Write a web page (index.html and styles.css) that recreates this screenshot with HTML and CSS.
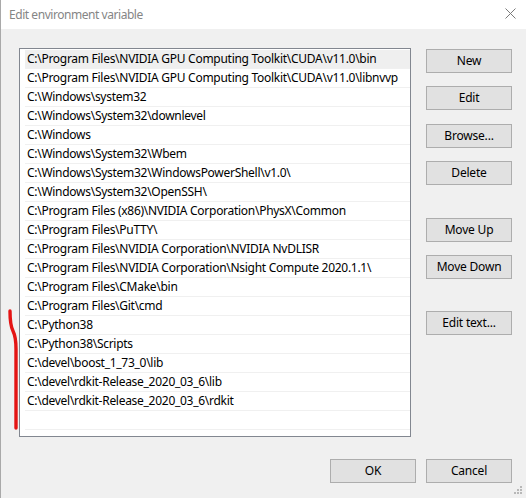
FILE: index.html
```html
<!DOCTYPE html>
<html>
<head>
<meta charset="utf-8">
<link rel="stylesheet" href="styles.css">
</head>
<body>
<div class="dialog">
  <div class="titlebar">
    <span class="title">Edit environment variable</span>
    <svg class="close" width="11" height="11" viewBox="0 0 11 11"><path d="M0.5 0.5 L10.5 10.5 M10.5 0.5 L0.5 10.5" stroke="#7a7a7a" stroke-width="1" fill="none"/></svg>
  </div>
  <div class="content">
    <div class="main">
      <div class="listbox">
        <div class="row selected">C:\Program Files\NVIDIA GPU Computing Toolkit\CUDA\v11.0\bin</div>
        <div class="row">C:\Program Files\NVIDIA GPU Computing Toolkit\CUDA\v11.0\libnvvp</div>
        <div class="row">C:\Windows\system32</div>
        <div class="row">C:\Windows\System32\downlevel</div>
        <div class="row">C:\Windows</div>
        <div class="row">C:\Windows\System32\Wbem</div>
        <div class="row">C:\Windows\System32\WindowsPowerShell\v1.0\</div>
        <div class="row">C:\Windows\System32\OpenSSH\</div>
        <div class="row">C:\Program Files (x86)\NVIDIA Corporation\PhysX\Common</div>
        <div class="row">C:\Program Files\PuTTY\</div>
        <div class="row">C:\Program Files\NVIDIA Corporation\NVIDIA NvDLISR</div>
        <div class="row">C:\Program Files\NVIDIA Corporation\Nsight Compute 2020.1.1\</div>
        <div class="row">C:\Program Files\CMake\bin</div>
        <div class="row">C:\Program Files\Git\cmd</div>
        <div class="row">C:\Python38</div>
        <div class="row">C:\Python38\Scripts</div>
        <div class="row">C:\devel\boost_1_73_0\lib</div>
        <div class="row">C:\devel\rdkit-Release_2020_03_6\lib</div>
        <div class="row">C:\devel\rdkit-Release_2020_03_6\rdkit</div>
        <div class="row"></div>
      </div>
      <div class="buttons">
        <button class="btn">New</button>
        <button class="btn gap13">Edit</button>
        <button class="btn gap14">Browse...</button>
        <button class="btn gap13">Delete</button>
        <button class="btn gap33">Move Up</button>
        <button class="btn gap13">Move Down</button>
        <button class="btn gap32">Edit text...</button>
      </div>
    </div>
    <div class="footer">
      <button class="btn">OK</button>
      <button class="btn">Cancel</button>
    </div>
  </div>
  <svg class="mark" width="20" height="130" viewBox="0 0 20 130"><path d="M10 11 C10 21 10.5 26 13 31 C15.5 36 16 40 16 49 L16 128" stroke="#e41414" stroke-width="3.4" fill="none" stroke-linecap="round"/></svg>
  <svg class="grip" width="8" height="8" viewBox="0 0 8 8" fill="#b8b8b8"><rect x="6" y="0" width="2" height="2"/><rect x="3" y="3" width="2" height="2"/><rect x="6" y="3" width="2" height="2"/><rect x="0" y="6" width="2" height="2"/><rect x="3" y="6" width="2" height="2"/><rect x="6" y="6" width="2" height="2"/></svg>
</div>
</body>
</html>
```
FILE: styles.css
```css
html, body {
  margin: 0;
  padding: 0;
}
body {
  width: 526px;
  height: 498px;
  overflow: hidden;
  font-family: "Segoe UI", "Noto Sans", "Liberation Sans", sans-serif;
  font-size: 12px;
  color: #000;
}
.dialog {
  position: relative;
  width: 526px;
  height: 498px;
  background: #f0f0f0;
  box-sizing: border-box;
  border-left: 1px solid #a9a9a9;
}
.titlebar {
  height: 29px;
  background: #fff;
  display: flex;
  align-items: center;
  justify-content: space-between;
  padding: 0 10px 1px 8px;
  box-sizing: border-box;
}
.title {
  color: #858585;
  font-size: 12px;
  letter-spacing: -0.45px;
}
.close {
  margin-top: -1px;
}
.content {
  display: flex;
  flex-direction: column;
}
.main {
  display: flex;
  padding: 19px 14px 0 18px;
  gap: 15px;
}
.listbox {
  width: 392px;
  height: 389px;
  box-sizing: border-box;
  background: #fff;
  border: 1px solid #828790;
  padding: 1px 0 0 5px;
}
.row {
  height: 18px;
  line-height: 18px;
  border-bottom: 1px solid #f0f0f0;
  padding-left: 2px;
  white-space: nowrap;
  overflow: hidden;
  letter-spacing: -0.28px;
}
.row.selected {
  background: #efefef;
}
.buttons {
  display: flex;
  flex-direction: column;
  padding-top: 1px;
}
.btn {
  width: 86px;
  height: 24px;
  box-sizing: border-box;
  background: #e1e1e1;
  border: 1px solid #adadad;
  border-radius: 0;
  font-family: inherit;
  font-size: 12px;
  color: #000;
  padding: 0 0 1px;
  margin: 0;
  letter-spacing: -0.2px;
}
.gap13 { margin-top: 13px; }
.gap14 { margin-top: 14px; }
.gap32 { margin-top: 32px; }
.gap33 { margin-top: 33px; }
.footer {
  display: flex;
  justify-content: flex-end;
  gap: 10px;
  padding: 22px 14px 0 0;
}
.mark {
  position: absolute;
  left: -1px;
  top: 300px;
}
.grip {
  position: absolute;
  right: 4px;
  bottom: 4px;
}
```
